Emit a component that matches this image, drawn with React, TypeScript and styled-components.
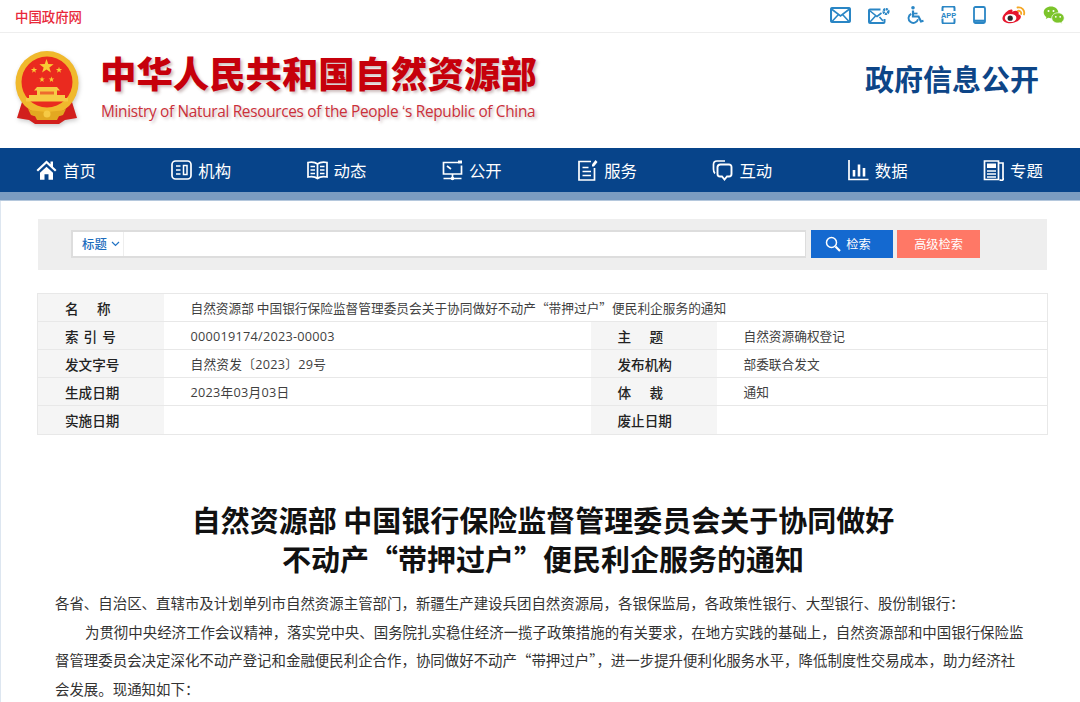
import React from "react";
import styled, { createGlobalStyle } from "styled-components";

const CJK = `"Noto Sans CJK SC", "Noto Sans", sans-serif`;

const Global = createGlobalStyle`
  html, body { margin: 0; padding: 0; height: 702px; overflow: hidden; background: #fff; }
  body { font-family: ${CJK}; }
  * { box-sizing: border-box; }
`;

const Page = styled.div`
  width: 1080px;
  height: 702px;
  overflow: hidden;
  background: #fff;
`;
const TopBar = styled.div`
  height: 33px;
  border-bottom: 1px solid #eeeeee;
  display: flex;
  align-items: center;
  justify-content: space-between;
  padding: 0 7.5px 0 15px;
`;
const GovLink = styled.span`
  color: #e8283a;
  font-size: 13.4px;
  font-weight: 500;
`;
const TopIcons = styled.div`
  display: flex;
  align-items: center;
  margin-bottom: 2px;
`;
const TopIcon = styled.span<{ $w: number }>`
  display: flex;
  justify-content: center;
  width: ${(p) => p.$w}px;
`;
const Header = styled.header`
  height: 115px;
  display: flex;
  align-items: flex-start;
  justify-content: space-between;
  padding: 17px 41px 0 15px;
`;
const Brand = styled.div`
  display: flex;
  gap: 22px;
`;
const EmblemWrap = styled.div`
  display: flex;
  filter: blur(0.35px) drop-shadow(1px 2px 2px rgba(0, 0, 0, 0.2));
`;
const BrandText = styled.div`
  display: flex;
  flex-direction: column;
`;
const BrandCn = styled.div`
  color: #c6000b;
  font-size: 36.4px;
  line-height: 50px;
  font-weight: 900;
  white-space: nowrap;
  margin: -3px 0 0 -1px;
  text-shadow: 2px 2px 3px rgba(90, 40, 40, 0.3);
`;
const BrandEn = styled.div`
  font-family: "Open Sans", sans-serif;
  color: #cb303a;
  font-size: 15.4px;
  line-height: 20px;
  letter-spacing: -0.32px;
  margin-top: 5px;
  white-space: nowrap;
  text-shadow: 2px 2px 3px rgba(90, 40, 40, 0.3);
`;
const Section = styled.div`
  color: #0d4587;
  font-size: 29px;
  font-weight: 700;
  line-height: 40px;
  margin-top: 8px;
  white-space: nowrap;
`;
const Nav = styled.nav`
  height: 44px;
  background: #07448a;
  display: flex;
  align-items: center;
  padding-left: 36px;
`;
const NavItem = styled.div`
  flex: none;
  width: 135.3px;
  display: flex;
  align-items: center;
  gap: 6px;
  color: #fff;
  font-size: 16.4px;
  line-height: 44px;
`;
const Strip = styled.div`
  height: 9px;
  background: #7b9cc1;
  border-bottom: 1px solid #b5c8dd;
`;
const Content = styled.main`
  border-left: 1px solid #dde6f0;
  height: 501px;
  overflow: hidden;
`;
const SearchPanel = styled.div`
  margin: 18px 33px 0 37px;
  height: 51px;
  background: #eeeeee;
  display: flex;
  align-items: flex-start;
  padding: 11px 0 0 33px;
`;
const SearchBox = styled.div`
  width: 735px;
  height: 28px;
  background: #fff;
  border: 2px solid #dddddd;
  border-right-width: 1px;
  display: flex;
  align-items: center;
`;
const Scope = styled.div`
  width: 51px;
  height: 100%;
  border-right: 1px solid #eeeeee;
  color: #1d6cbd;
  font-size: 12.4px;
  font-weight: 500;
  display: flex;
  align-items: center;
  gap: 4px;
  padding-left: 9px;
`;
const SearchButton = styled.div<{ $bg: string; $w: number; $ml: number; $pr?: number }>`
  height: 28px;
  width: ${(p) => p.$w}px;
  margin-left: ${(p) => p.$ml}px;
  padding-right: ${(p) => p.$pr ?? 0}px;
  background: ${(p) => p.$bg};
  color: #fff;
  font-size: 12.2px;
  display: flex;
  align-items: center;
  justify-content: center;
  gap: 5px;
`;
const Meta = styled.table`
  margin: 23px 0 0 36px;
  width: 1011px;
  border-collapse: collapse;
  table-layout: fixed;
  border: 1px solid #e8e8e8;
`;
const Row = styled.tr<{ $h: number }>`
  height: ${(p) => p.$h}px;
  border-bottom: 1px solid #e8e8e8;
`;
const Label = styled.th<{ $ls?: number }>`
  background: #f5f5f5;
  color: #222;
  font-size: 13.6px;
  font-weight: 500;
  text-align: left;
  padding: 0 0 0 27px;
  letter-spacing: ${(p) => p.$ls ?? 0}px;
  white-space: pre;
`;
const Value = styled.td<{ $latin?: boolean }>`
  color: #3f3f3f;
  font-family: ${(p) => (p.$latin ? `"Open Sans", ${CJK}` : CJK)};
  font-size: 12.7px;
  letter-spacing: ${(p) => (p.$latin ? "0.25px" : "0")};
  padding: 0 0 0 27px;
  white-space: nowrap;
`;
const Title = styled.h1`
  margin: 65px 0 0;
  padding-left: 5px;
  text-align: center;
  color: #111;
  font-size: 29px;
  line-height: 38.5px;
  font-weight: 700;
`;
const Body = styled.div`
  margin-top: 12px;
  padding-left: 54px;
  color: #333;
  font-size: 14.45px;
  line-height: 28.6px;
`;
const P = styled.p<{ $indent?: boolean }>`
  margin: 0;
  text-indent: ${(p) => (p.$indent ? "30px" : "0")};
  white-space: nowrap;
`;

const BLUE = "#2a86c5";
const MailIcon = () => (
  <svg width="21" height="16" viewBox="0 0 21 16" fill="none" stroke={BLUE} strokeWidth="2.100">
    <rect x="1" y="1" width="19" height="14" rx="1.500" />
    <path d="M1.500 2l9 7 9-7M2 14.500l6-6.500M19 14.500L13 8" strokeWidth="1.600" />
  </svg>
);
const MailGearIcon = () => (
  <svg width="22" height="17" viewBox="0 0 22 17" fill="none" stroke={BLUE} strokeWidth="2">
    <path d="M16.500 12V15a1 1 0 0 1-1 1H2a1 1 0 0 1-1-1V3.500a1 1 0 0 1 1-1H12.500" />
    <path d="M1.500 3.500l7.500 6 4.500-3.500M2 15l5.500-6M15 14l-3.500-4" strokeWidth="1.600" />
    <circle cx="18" cy="4.500" r="2.400" strokeWidth="2.400" strokeDasharray="1.900 .6" />
  </svg>
);
const WheelIcon = () => (
  <svg width="17" height="18" viewBox="0 0 17 18" fill="none" stroke={BLUE}>
    <circle cx="6" cy="1.800" r="1.800" fill={BLUE} stroke="none" />
    <path d="M6 4.500V10.500H11.500L14 15.500L16.500 14.800" strokeWidth="2.200" />
    <path d="M6 7.500H10.500" strokeWidth="1.700" />
    <path d="M4.200 7.800A4.800 4.800 0 1 0 11 13.300" strokeWidth="1.900" />
  </svg>
);
const AppIcon = () => (
  <svg width="17" height="18" viewBox="0 0 17 18" fill="none">
    <path d="M2.500 5V2a1.500 1.500 0 0 1 1.500-1.500h9A1.500 1.500 0 0 1 14.500 2v3M2.500 12.500V16A1.500 1.500 0 0 0 4 17.500h9a1.500 1.500 0 0 0 1.500-1.500v-3.500" stroke={BLUE} strokeWidth="2" />
    <text x="8.500" y="11.800" textAnchor="middle" fontFamily="Liberation Sans" fontWeight="700" fontSize="7.400" fill={BLUE}>APP</text>
  </svg>
);
const PhoneIcon = () => (
  <svg width="13" height="18" viewBox="0 0 13 18" fill="none">
    <rect x="1" y="1" width="11" height="16" rx="1.500" stroke={BLUE} strokeWidth="1.800" />
    <path d="M1 14.800h11" stroke={BLUE} strokeWidth="2.200" />
  </svg>
);
const WeiboIcon = () => (
  <svg width="25" height="19" viewBox="0 0 25 19">
    <path d="M10 5.800C14.500 3.800 17.500 5 16.500 8.200c3 .8 3 3.300 1 5.300-3 3.200-8.500 4.800-13 3.200C.8 15.400-.6 13 1.200 9.800 3.300 6 7.800 2.800 9.800 3.600c1 .4 1 1.300.2 2.200z" fill="#e6162d" />
    <ellipse cx="8.600" cy="12" rx="5.800" ry="4.100" fill="#fff" />
    <circle cx="8.200" cy="12.200" r="2.600" fill="#2a2a2a" />
    <path d="M15.500 1.500c4.200-.8 7.700 2.800 6.500 7M16 4.800c2-.3 3.600 1.200 3.100 3.200" fill="none" stroke="#f5a623" strokeWidth="1.800" strokeLinecap="round" />
  </svg>
);
const WechatIcon = () => (
  <svg width="22" height="19" viewBox="0 0 22 19">
    <path d="M8 .5C3.900.5.700 3.100.700 6.400c0 1.900 1.100 3.500 2.700 4.600L2.800 13l2.400-1.200c.9.300 1.800.4 2.800.4 4.100 0 7.300-2.600 7.300-5.800S12.100.5 8 .5z" fill="#7cc42b" />
    <path d="M15 6.800c-3.500 0-6.300 2.300-6.300 5.100S11.500 17 15 17c.8 0 1.500-.1 2.200-.3l2 1-.5-1.700c1.500-.9 2.500-2.400 2.500-4 0-2.800-2.900-5.200-6.200-5.200z" fill="#7cc42b" stroke="#fff" strokeWidth=".7" />
    <circle cx="5.500" cy="5" r="1" fill="#fff" /><circle cx="10.500" cy="5" r="1" fill="#fff" />
    <circle cx="12.800" cy="10.800" r=".9" fill="#fff" /><circle cx="17.200" cy="10.800" r=".9" fill="#fff" />
  </svg>
);

const star = (cx: number, cy: number, r: number) => {
  const pts: string[] = [];
  for (let i = 0; i < 10; i++) {
    const rad = i % 2 === 0 ? r : r * 0.4;
    const a = (Math.PI / 5) * i - Math.PI / 2;
    pts.push(`${(cx + rad * Math.cos(a)).toFixed(2)},${(cy + rad * Math.sin(a)).toFixed(2)}`);
  }
  return pts.join(" ");
};

const Emblem = () => (
  <svg width="64" height="76" viewBox="0 0 64 76">
    <path d="M7 52 L2 68 L14 70 L20 74 L44 74 L50 70 L62 68 L57 52 Z" fill="#d21f1c" />
    <ellipse cx="32" cy="33" rx="31.500" ry="32" fill="#f0b92d" />
    <circle cx="32" cy="32" r="25.500" fill="#ea2a1f" />
    <polygon points={star(31.500, 16.500, 7.500)} fill="#f8cb34" />
    <polygon points={star(19, 20, 3.300)} fill="#f8cb34" />
    <polygon points={star(44, 20, 3.300)} fill="#f8cb34" />
    <polygon points={star(27, 29.500, 3)} fill="#f8cb34" />
    <polygon points={star(36.500, 29.500, 3)} fill="#f8cb34" />
    <path d="M22 37h20l3 3.500H19zM22 40.500h20V45H22zM14 45h36v3H14zM11 48h42v3.500H11z" fill="#f6ca45" />
    <path d="M25 41.500h14v3H25z" fill="#ea2a1f" opacity=".6" />
    <path d="M13 59 C18 62 26 60 32 63 C38 60 46 62 51 59 L48 65 C42 68 36 64 32 68 C28 64 22 68 16 65Z" fill="#e3a821" />
    <path d="M20 66h24l-2 4H22z" fill="#e3a821" />
    <circle cx="32" cy="64" r="3.500" fill="#f6ca45" />
    <path d="M23 71h18v3H23z" fill="#d21f1c" />
  </svg>
);

const NavSvg = ({ children }: { children: React.ReactNode }) => (
  <svg width="21" height="22" viewBox="0 0 21 22" fill="none" stroke="#fff" strokeWidth="1.700">{children}</svg>
);
const icons: Record<string, React.ReactNode> = {
  首页: <path d="M10.500 1.500L.5 11l1.500 1.500 8.500-8 8.500 8L20.500 11l-3.500-3.300V2.500h-2.500v2.800zM4 13.800l6.500-6 6.500 6v7H12.500v-5.500h-4v5.500H4z" fill="#fff" stroke="none" />,
  机构: <><rect x="1" y="2" width="19" height="18" rx="3.500" /><path d="M5 7h4.500M5 11h4.500M5 15h4.500" /><rect x="12.500" y="6.500" width="3.500" height="9" strokeWidth="1.500" /></>,
  动态: <><path d="M10.500 5C8 3 4 3 1 3.500V18c3-.5 7-.5 9.500 1.500C13 17.500 17 17.500 20 18V3.500C17 3 13 3 10.500 5zM10.500 5v14.500" /><path d="M3.500 7.500h4.500M3.500 11h4.500M3.500 14.500h4.500M13 7.500h4.500M13 11h4.500M13 14.500h4.500" strokeWidth="1.300" /></>,
  公开: <><path d="M16 3.500H1.500v11.500h18V6.500" /><path d="M5 7l4 3M10.500 19.500h-9M19.500 19.500h-9M10.500 15v4" /><rect x="16" y="1.500" width="4" height="3" fill="#fff" stroke="none" /><circle cx="10.500" cy="19.500" r="1.800" fill="#fff" stroke="none" /></>,
  服务: <><path d="M14 2.500H2v18.500h15.500V9" /><path d="M5.500 8.500h6M5.500 12.500h8.500M5.500 16.500h8.500" /><path d="M15 5.500L18.500 1 20.500 3 17 7.500h-2z" fill="#fff" stroke="none" /></>,
  互动: <><path d="M3 14.500C1.500 13.500 1.500 12 1.500 10V5.500C1.500 3.500 3 2 5 2h8" /><path d="M8.500 5.500h8A2.500 2.500 0 0 1 19.500 8v7a2.500 2.500 0 0 1-2.500 2.500h-2l-2.500 3-2.500-3H8A2.500 2.500 0 0 1 5.500 15V8a3 3 0 0 1 3-2.500z" strokeWidth="1.900" /></>,
  数据: <><path d="M1 1v19.500h19.500" /><path d="M6 11v6.500M11 5.500v12M16 9v8.500" strokeWidth="2.600" /></>,
  专题: <><path d="M15.500 20.500H1.500V2h14zM15.500 4h4.500v15a1.500 1.500 0 0 1-3 1.500" /><rect x="4" y="4.500" width="9" height="4.500" fill="#fff" stroke="none" /><path d="M4 12h9M4 15h9M4 18h9" strokeWidth="1.300" /></>,
};
const navNames = ["首页", "机构", "动态", "公开", "服务", "互动", "数据", "专题"];

export default function App() {
  return (
    <Page>
      <Global />
      <TopBar>
        <GovLink>中国政府网</GovLink>
        <TopIcons>
          <TopIcon $w={38}><MailIcon /></TopIcon>
          <TopIcon $w={39}><MailGearIcon /></TopIcon>
          <TopIcon $w={33}><WheelIcon /></TopIcon>
          <TopIcon $w={34}><AppIcon /></TopIcon>
          <TopIcon $w={28}><PhoneIcon /></TopIcon>
          <TopIcon $w={41}><WeiboIcon /></TopIcon>
          <TopIcon $w={38}><WechatIcon /></TopIcon>
        </TopIcons>
      </TopBar>
      <Header>
        <Brand>
          <EmblemWrap><Emblem /></EmblemWrap>
          <BrandText>
            <BrandCn>中华人民共和国自然资源部</BrandCn>
            <BrandEn>Ministry of Natural Resources of the People ʻs Republic of China</BrandEn>
          </BrandText>
        </Brand>
        <Section>政府信息公开</Section>
      </Header>
      <Nav>
        {navNames.map((n) => (
          <NavItem key={n}>
            <NavSvg>{icons[n]}</NavSvg>
            {n}
          </NavItem>
        ))}
      </Nav>
      <Strip />
      <Content>
        <SearchPanel>
          <SearchBox>
            <Scope>
              标题
              <svg width="9" height="6" viewBox="0 0 9 6" fill="none" stroke="#2173c4" strokeWidth="1.200"><path d="M1 1l3.500 3.500L8 1" /></svg>
            </Scope>
          </SearchBox>
          <SearchButton $bg="#1469d0" $w={82} $ml={5} $pr={8}>
            <svg width="16" height="16" viewBox="0 0 16 16" fill="none" stroke="#fff"><circle cx="6.500" cy="6.500" r="5" strokeWidth="1.500" /><path d="M10.500 10.500L15 15" strokeWidth="2.200" /></svg>
            检索
          </SearchButton>
          <SearchButton $bg="#ff7866" $w={83} $ml={4}>高级检索</SearchButton>
        </SearchPanel>
        <Meta>
          <colgroup>
            <col style={{ width: 126 }} />
            <col style={{ width: 427 }} />
            <col style={{ width: 126 }} />
            <col />
          </colgroup>
          <tbody>
            <Row $h={28}>
              <Label>{"名      称"}</Label>
              <Value colSpan={3}>自然资源部 中国银行保险监督管理委员会关于协同做好不动产“带押过户”便民利企服务的通知</Value>
            </Row>
            <Row $h={28}>
              <Label $ls={5}>索引号</Label>
              <Value $latin>000019174/2023-00003</Value>
              <Label>{"主      题"}</Label>
              <Value>自然资源确权登记</Value>
            </Row>
            <Row $h={28}>
              <Label>发文字号</Label>
              <Value $latin>自然资发〔2023〕29号</Value>
              <Label>发布机构</Label>
              <Value>部委联合发文</Value>
            </Row>
            <Row $h={28}>
              <Label>生成日期</Label>
              <Value $latin>2023年03月03日</Value>
              <Label>{"体      裁"}</Label>
              <Value>通知</Value>
            </Row>
            <Row $h={29}>
              <Label>实施日期</Label>
              <Value />
              <Label>废止日期</Label>
              <Value />
            </Row>
          </tbody>
        </Meta>
        <Title>
          自然资源部 中国银行保险监督管理委员会关于协同做好
          <br />
          不动产“带押过户”便民利企服务的通知
        </Title>
        <Body>
          <P>{"各省、自治区、直辖市及计划单列市自然资源主管部门\uFF0C新疆生产建设兵团自然资源局\uFF0C各银保监局\uFF0C各政策性银行、大型银行、股份制银行\uFF1A"}</P>
          <P $indent>{"为贯彻中央经济工作会议精神\uFF0C落实党中央、国务院扎实稳住经济一揽子政策措施的有关要求\uFF0C在地方实践的基础上\uFF0C自然资源部和中国银行保险监"}</P>
          <P>{"督管理委员会决定深化不动产登记和金融便民利企合作\uFF0C协同做好不动产“带押过户”\uFF0C进一步提升便利化服务水平\uFF0C降低制度性交易成本\uFF0C助力经济社"}</P>
          <P>{"会发展。现通知如下\uFF1A"}</P>
        </Body>
      </Content>
    </Page>
  );
}
